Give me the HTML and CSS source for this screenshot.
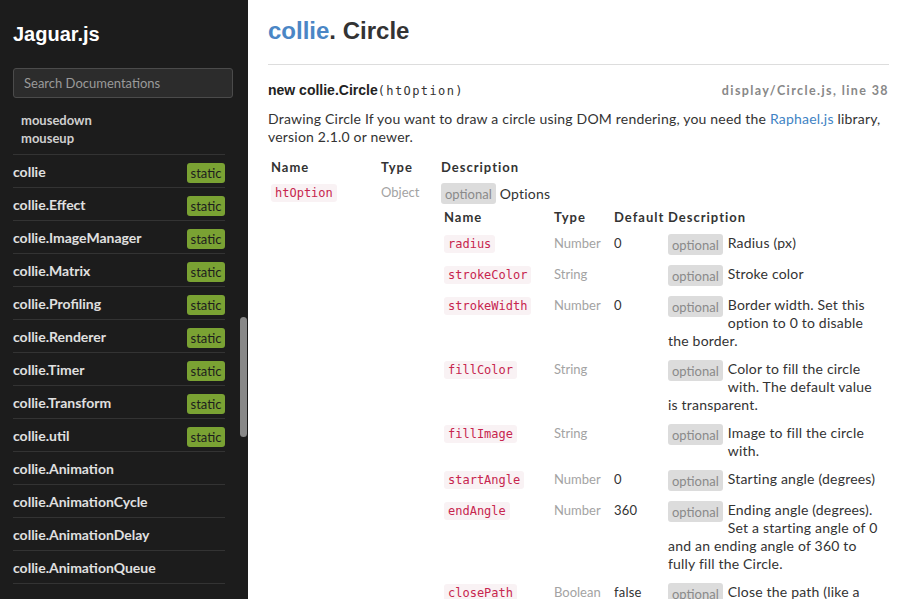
FILE: index.html
```
<!DOCTYPE html>
<html>
<head>
<meta charset="utf-8">
<title>Jaguar.js - collie.Circle</title>
<link rel="stylesheet" href="styles.css">
</head>
<body>
<div class="page">
  <aside class="sidebar">
    <h1 class="brand">Jaguar.js</h1>
    <input class="search" type="text" placeholder="Search Documentations">
    <ul class="events">
      <li>mousedown</li>
      <li>mouseup</li>
    </ul>
    <ul class="classes">
      <li class="cls"><span>collie</span><span class="static">static</span></li>
      <li class="cls"><span>collie.Effect</span><span class="static">static</span></li>
      <li class="cls"><span>collie.ImageManager</span><span class="static">static</span></li>
      <li class="cls"><span>collie.Matrix</span><span class="static">static</span></li>
      <li class="cls"><span>collie.Profiling</span><span class="static">static</span></li>
      <li class="cls"><span>collie.Renderer</span><span class="static">static</span></li>
      <li class="cls"><span>collie.Timer</span><span class="static">static</span></li>
      <li class="cls"><span>collie.Transform</span><span class="static">static</span></li>
      <li class="cls"><span>collie.util</span><span class="static">static</span></li>
      <li class="cls"><span>collie.Animation</span></li>
      <li class="cls"><span>collie.AnimationCycle</span></li>
      <li class="cls"><span>collie.AnimationDelay</span></li>
      <li class="cls"><span>collie.AnimationQueue</span></li>
    </ul>
    <div class="scrollbar"></div>
  </aside>

  <main class="content">
    <h1 class="title"><a class="ns" href="#">collie</a>. Circle</h1>

    <div class="sig">
      <h4 class="name">new collie.Circle<span class="sig-params">(htOption)</span></h4>
      <span class="src">display/Circle.js, line 38</span>
    </div>

    <p class="desc">Drawing Circle If you want to draw a circle using DOM rendering, you need the <a class="link" href="#">Raphael.js</a> library, version 2.1.0 or newer.</p>

    <table class="params">
      <colgroup><col class="c-name"><col class="c-type"><col></colgroup>
      <thead>
        <tr><th>Name</th><th>Type</th><th>Description</th></tr>
      </thead>
      <tbody>
        <tr>
          <td><code class="code">htOption</code></td>
          <td class="type">Object</td>
          <td class="descr">
            <div class="opt-line"><span class="optional">optional</span><span>Options</span></div>
            <table class="params nested">
              <colgroup><col class="c-name"><col class="c-type"><col class="c-def"><col></colgroup>
              <thead>
                <tr><th>Name</th><th>Type</th><th>Default</th><th>Description</th></tr>
              </thead>
              <tbody>
                <tr>
                  <td><code class="code">radius</code></td>
                  <td class="type">Number</td>
                  <td class="def">0</td>
                  <td class="ndesc"><span class="optional fl">optional</span>Radius (px)</td>
                </tr>
                <tr>
                  <td><code class="code">strokeColor</code></td>
                  <td class="type">String</td>
                  <td class="def"></td>
                  <td class="ndesc"><span class="optional fl">optional</span>Stroke color</td>
                </tr>
                <tr>
                  <td><code class="code">strokeWidth</code></td>
                  <td class="type">Number</td>
                  <td class="def">0</td>
                  <td class="ndesc"><span class="optional fl">optional</span>Border width. Set this option to 0 to disable the border.</td>
                </tr>
                <tr>
                  <td><code class="code">fillColor</code></td>
                  <td class="type">String</td>
                  <td class="def"></td>
                  <td class="ndesc"><span class="optional fl">optional</span>Color to fill the circle with. The default value is transparent.</td>
                </tr>
                <tr>
                  <td><code class="code">fillImage</code></td>
                  <td class="type">String</td>
                  <td class="def"></td>
                  <td class="ndesc"><span class="optional fl">optional</span>Image to fill the circle with.</td>
                </tr>
                <tr>
                  <td><code class="code">startAngle</code></td>
                  <td class="type">Number</td>
                  <td class="def">0</td>
                  <td class="ndesc"><span class="optional fl">optional</span>Starting angle (degrees)</td>
                </tr>
                <tr>
                  <td><code class="code">endAngle</code></td>
                  <td class="type">Number</td>
                  <td class="def">360</td>
                  <td class="ndesc"><span class="optional fl">optional</span>Ending angle (degrees). Set a starting angle of 0 and an ending angle of 360 to fully fill the Circle.</td>
                </tr>
                <tr>
                  <td><code class="code">closePath</code></td>
                  <td class="type">Boolean</td>
                  <td class="def">false</td>
                  <td class="ndesc"><span class="optional fl">optional</span>Close the path (like a closed shape).</td>
                </tr>
              </tbody>
            </table>
          </td>
        </tr>
      </tbody>
    </table>
  </main>
</div>
</body>
</html>
```
FILE: styles.css
```
* { box-sizing: border-box; }

html, body {
  margin: 0;
  height: 100%;
  overflow: hidden;
}

body {
  font-family: Lato, "Open Sans", sans-serif;
  color: #333;
  background: #fff;
}

.page {
  display: flex;
  height: 100vh;
  overflow: hidden;
}

/* ---------- sidebar ---------- */
.sidebar {
  position: relative;
  flex: none;
  width: 248px;
  height: 100%;
  background: #1c1c1c;
  padding: 22px 0 0 13px;
  overflow: hidden;
}

.brand {
  margin: 0;
  font: bold 20px/24px "Liberation Sans", Arial, sans-serif;
  color: #fff;
}

.search {
  display: block;
  margin-top: 22px;
  width: 220px;
  height: 30px;
  background: #2c2c2c;
  border: 1px solid #4b4b4b;
  border-radius: 3px;
  padding: 0 10px;
  font: 13px Lato, sans-serif;
  color: #ddd;
  outline: none;
}
.search::placeholder { color: #9a9a9a; }

.events {
  list-style: none;
  margin: 13px 0 0;
  padding: 0 0 7px 8px;
  width: 212px;
  border-bottom: 1px solid #333;
  font: bold 13px/18px Lato, sans-serif;
  color: #cfcfcf;
}

.classes {
  list-style: none;
  margin: 0;
  padding: 0;
  width: 212px;
}

.cls {
  display: flex;
  justify-content: space-between;
  align-items: center;
  height: 33px;
  border-bottom: 1px solid #333;
  font: bold 14px Lato, sans-serif;
  color: #e0e0e0;
}

.static {
  margin-top: 4px;
  width: 38px;
  text-align: center;
  background: #7aa233;
  color: #1d1d1d;
  font: 13px/20px Lato, sans-serif;
  border-radius: 3px;
}

.scrollbar {
  position: absolute;
  left: 240px;
  top: 317px;
  width: 7px;
  height: 120px;
  background: #888;
  border-radius: 4px;
}

/* ---------- content ---------- */
.content {
  flex: 1;
  min-width: 0;
  padding: 16px 18px 0 20px;
}

.title {
  margin: 0;
  padding-bottom: 18px;
  border-bottom: 1px solid #ddd;
  font: bold 24px/30px "Liberation Sans", Arial, sans-serif;
  color: #333;
}
.ns { color: #4a86c5; text-decoration: none; }

.sig {
  display: flex;
  justify-content: space-between;
  align-items: baseline;
  margin-top: 16px;
}

.name {
  margin: 0;
  font: bold 14px/18px "Liberation Sans", Arial, sans-serif;
  color: #222;
}

.sig-params {
  font: 12px "DejaVu Sans Mono", monospace;
  letter-spacing: 1.4px;
  color: #333;
}

.src {
  font: bold 12.5px Lato, sans-serif;
  letter-spacing: 1.4px;
  color: #888;
}

.desc {
  margin: 11px 0 0;
  font: 14px/18px Lato, sans-serif;
  letter-spacing: 0.2px;
  color: #333;
}
.link { color: #4183c4; text-decoration: none; }

/* ---------- tables ---------- */
table.params {
  width: 100%;
  margin-top: 9px;
  border-collapse: collapse;
  table-layout: fixed;
}
table.params.nested { margin-top: 1px; }

.c-name { width: 110px; }
.c-type { width: 60px; }
.c-def { width: 54px; }

.params th {
  text-align: left;
  padding: 3px;
  font: bold 13px/18px Lato, sans-serif;
  letter-spacing: 1px;
  color: #333;
}

.params td {
  vertical-align: top;
  padding: 4px 3px 3px;
  font: 14px/18px Lato, sans-serif;
  letter-spacing: 0.2px;
}

.nested td { padding: 5px 3px; }
.nested td.ndesc { padding-right: 6px; }

.code {
  display: inline-block;
  padding: 2px 4px;
  font: 12px/14px "DejaVu Sans Mono", monospace;
  letter-spacing: 0;
  color: #c7254e;
  background: #f9f2f4;
  border-radius: 3px;
}

.params td.type {
  font-size: 13px;
  letter-spacing: 0;
  color: #a3a3a3;
}

.params td.def {
  font-size: 13px;
  color: #333;
}

.opt-line {
  display: flex;
  align-items: center;
  gap: 4px;
  height: 21px;
}

.optional {
  display: inline-block;
  height: 21px;
  padding: 2px 4px 0;
  font: 13px/19px Lato, sans-serif;
  letter-spacing: 0;
  color: #8a8a8a;
  background: #dcdcdc;
  border-radius: 3px;
}

.optional.fl {
  float: left;
  margin-right: 5px;
}

.ndesc { color: #333; }
```
